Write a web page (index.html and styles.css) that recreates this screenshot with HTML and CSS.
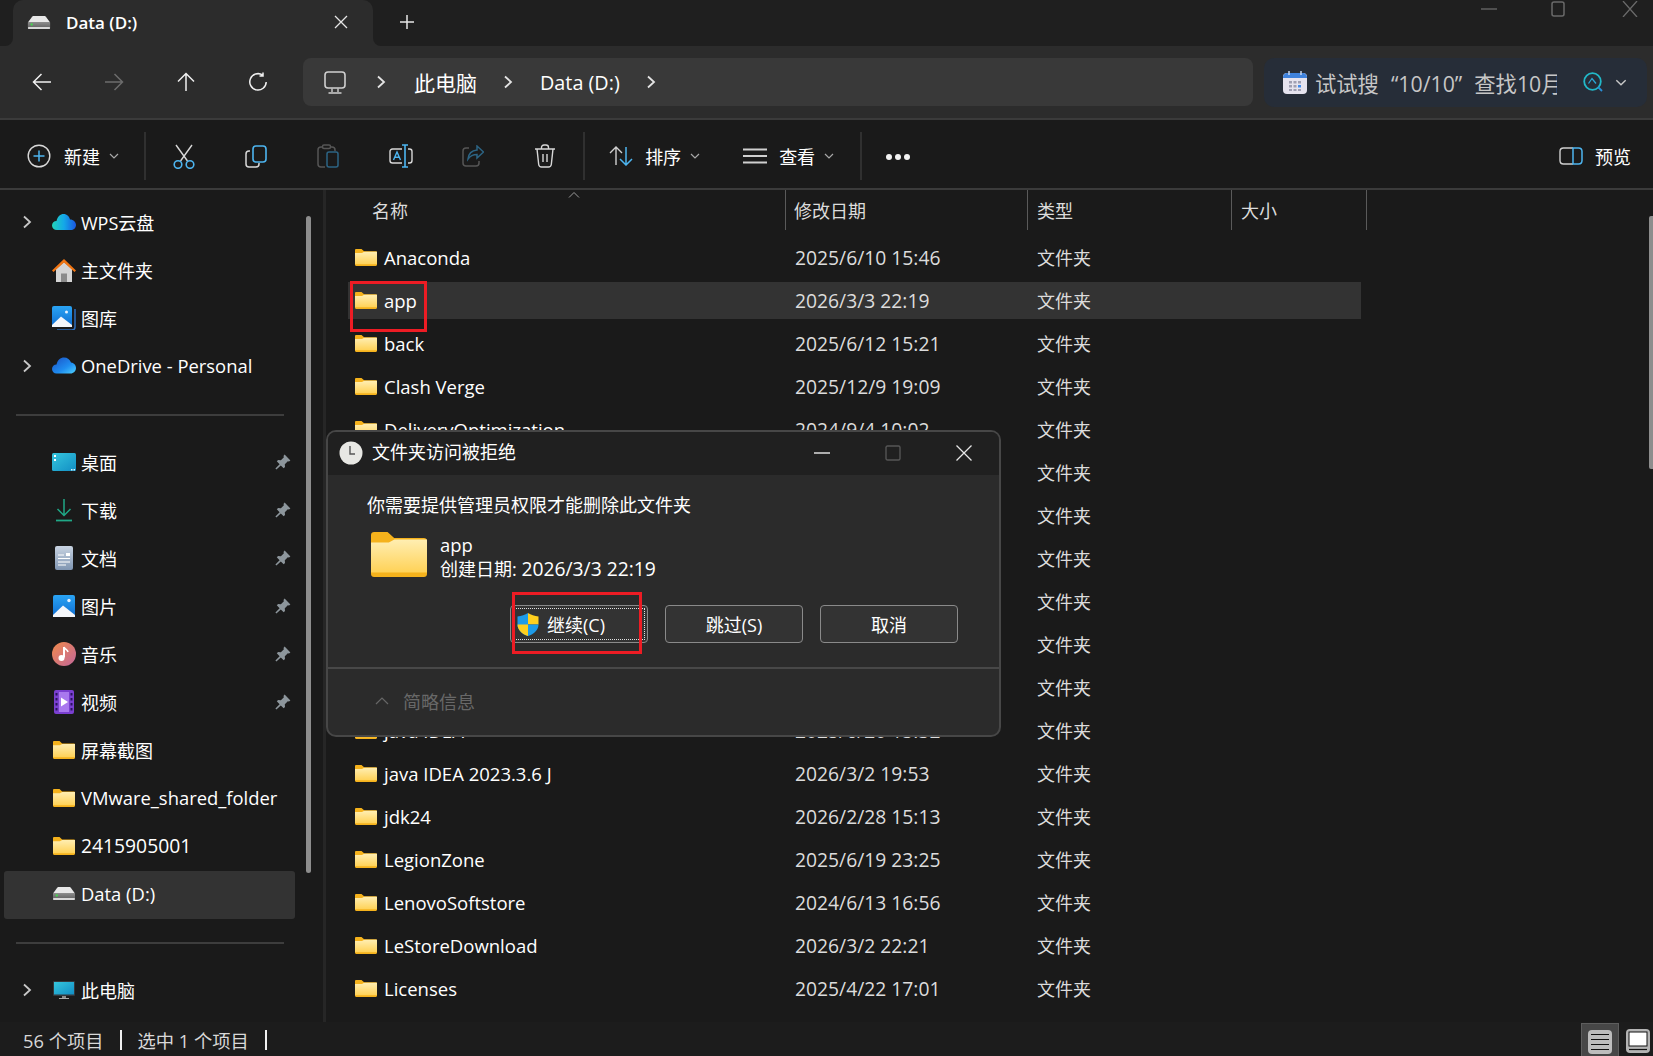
FILE: index.html
```html
<!DOCTYPE html>
<html lang="zh-CN">
<head>
  <meta charset="UTF-8">
  <title>Data (D:) - 文件资源管理器</title>
  <link rel="stylesheet" href="styles.css">
</head>
<body>
<svg class="sprite" width="0" height="0">
  <defs>
    <linearGradient id="folderFront" x1="0" y1="0" x2="0" y2="1">
      <stop offset="0" stop-color="#ffeeb2"/>
      <stop offset="1" stop-color="#ffd257"/>
    </linearGradient>
    <linearGradient id="wpsCloud" x1="0" y1="0" x2="1" y2="0">
      <stop offset="0" stop-color="#22d3b8"/>
      <stop offset="0.5" stop-color="#14a8e8"/>
      <stop offset="1" stop-color="#1a56e0"/>
    </linearGradient>
    <linearGradient id="oneCloud" x1="0" y1="0" x2="1" y2="1">
      <stop offset="0" stop-color="#1b4fc4"/>
      <stop offset="0.6" stop-color="#1f8df0"/>
      <stop offset="1" stop-color="#4fd2ff"/>
    </linearGradient>
    <linearGradient id="picBlue" x1="0" y1="0" x2="0" y2="1">
      <stop offset="0" stop-color="#2aa4f4"/>
      <stop offset="1" stop-color="#0f6cd0"/>
    </linearGradient>
    <linearGradient id="deskTeal" x1="0" y1="0" x2="1" y2="1">
      <stop offset="0" stop-color="#35c6dd"/>
      <stop offset="1" stop-color="#128ec4"/>
    </linearGradient>
    <linearGradient id="musicGrad" x1="0" y1="0" x2="1" y2="1">
      <stop offset="0" stop-color="#f08a4b"/>
      <stop offset="1" stop-color="#c2679a"/>
    </linearGradient>
    <linearGradient id="docGrad" x1="0" y1="0" x2="0" y2="1">
      <stop offset="0" stop-color="#c9d4e2"/>
      <stop offset="1" stop-color="#7f95b2"/>
    </linearGradient>
    <linearGradient id="driveGrad" x1="0" y1="0" x2="0" y2="1">
      <stop offset="0" stop-color="#8a8a8a"/>
      <stop offset="1" stop-color="#5b5b5b"/>
    </linearGradient>
    <symbol id="folder" viewBox="0 0 22 18" preserveAspectRatio="none">
      <path d="M0 1.2C0 .5.5 0 1.2 0h5.3l2.6 2.4h11.7c.7 0 1.2.5 1.2 1.2v13.2c0 .7-.5 1.2-1.2 1.2H1.2C.5 18 0 17.5 0 16.8z" fill="#f5b21c"/>
      <path d="M0 4.2 7 4.2 9.2 3H22v13.2H0z" fill="url(#folderFront)"/>
    </symbol>
    <symbol id="pin" viewBox="0 0 16 16">
      <path d="M9.6.6 15.4 6.400 14 7.600l-1.200-.4-3 3 .2 2.800-1.300 1.300L5.800 11.400 1.400 15.600.4 14.600 4.600 10.200 1.800 7.300 3.100 6l2.800.2 3-3-.4-1.200z" fill="#8d969c"/>
    </symbol>
    <symbol id="chev-right" viewBox="0 0 10 14">
      <path d="M2 1.500 8 7 2 12.500" fill="none" stroke="currentColor" stroke-width="1.800"/>
    </symbol>
    <symbol id="chev-down" viewBox="0 0 10 6">
      <path d="M1 1 5 5 9 1" fill="none" stroke="currentColor" stroke-width="1.200"/>
    </symbol>
    <symbol id="drive" viewBox="0 0 24 14">
      <path d="M4 1.500C4.500.6 5.200 0 6.300 0h11.400c1.100 0 1.800.6 2.300 1.500L24 7H0z" fill="#e8e8e8"/>
      <path d="M0 7h24v5.500c0 .8-.7 1.500-1.500 1.500h-21C.7 14 0 13.300 0 12.500z" fill="url(#driveGrad)"/>
      <rect x="0" y="11.800" width="24" height="2.200" rx="1" fill="#d8d8d8"/>
      <rect x="3" y="8" width="2.200" height="2.200" fill="#3fdc4a"/>
    </symbol>
  </defs>
</svg>

<div class="window">

  <div class="tabbar">
    <div class="tab-gap-left"></div>
    <div class="tab">
      <svg class="tab-icon" width="24" height="13"><use href="#drive"/></svg>
      <span class="tab-title">Data (D:)</span>
      <svg class="tab-close" width="14" height="14" viewBox="0 0 14 14"><path d="M1 1 13 13M13 1 1 13" stroke="#e6e6e6" stroke-width="1.300"/></svg>
    </div>
    <div class="tab-rest">
      <svg class="tab-plus" width="16" height="16" viewBox="0 0 16 16"><path d="M8 1V15M1 8H15" stroke="#e6e6e6" stroke-width="1.500"/></svg>
      <div class="win-controls">
        <svg width="16" height="16" viewBox="0 0 16 16"><path d="M0 8H16" stroke="#6a6a6a" stroke-width="1.300"/></svg>
        <svg width="14" height="16" viewBox="0 0 14 16"><rect x="1" y="1" width="12" height="14" rx="2" fill="none" stroke="#6a6a6a" stroke-width="1.500"/></svg>
        <svg class="win-close" width="16" height="16" viewBox="0 0 16 16"><path d="M1 0 15 16M15 0 1 16" stroke="#6a6a6a" stroke-width="1.300"/></svg>
      </div>
    </div>
  </div>

  <div class="navbar">
    <div class="nav-buttons">
      <svg width="20" height="20" viewBox="0 0 20 20"><path d="M19 10H1.500M9.500 2 1.500 10l8 8" fill="none" stroke="#f0f0f0" stroke-width="1.500"/></svg>
      <svg width="20" height="20" viewBox="0 0 20 20"><path d="M1 10H18.500M10.500 2l8 8-8 8" fill="none" stroke="#6c6c6c" stroke-width="1.500"/></svg>
      <svg width="20" height="20" viewBox="0 0 20 20"><path d="M10 19V1.500M2 9.500 10 1.500l8 8" fill="none" stroke="#f0f0f0" stroke-width="1.500"/></svg>
      <svg width="20" height="20" viewBox="0 0 20 20"><path d="M14.500 3A8.200 8.200 0 1 0 18.200 10M15 .5V4H11.500" fill="none" stroke="#f0f0f0" stroke-width="1.500"/></svg>
    </div>
    <div class="crumbs">
      <svg class="crumb-pc" width="22" height="23" viewBox="0 0 22 23"><rect x="1" y="1" width="20" height="16" rx="3" fill="none" stroke="#cfcfcf" stroke-width="1.600"/><path d="M8 17.500V21M14 17.500V21M4.500 22H17.500" stroke="#cfcfcf" stroke-width="1.400"/></svg>
      <svg class="crumb-sep first" width="10" height="14"><use href="#chev-right"/></svg>
      <span class="crumb">此电脑</span>
      <svg class="crumb-sep" width="10" height="14"><use href="#chev-right"/></svg>
      <span class="crumb crumb-latin">Data (D:)</span>
      <svg class="crumb-sep" width="10" height="14"><use href="#chev-right"/></svg>
    </div>
    <div class="searchbox">
      <svg width="24" height="23" viewBox="0 0 24 23"><rect y="2" width="24" height="21" rx="4" fill="#e6e3ee"/><path d="M0 6C0 3.800 1.800 2 4 2h16c2.200 0 4 1.800 4 4v1H0z" fill="#3f82dc"/><path d="M6 0v4M18 0v4" stroke="#c9d6ec" stroke-width="1.500"/><g fill="#a09fb2"><rect x="6" y="10" width="3" height="2.500"/><rect x="10.500" y="10" width="3" height="2.500"/><rect x="6" y="14" width="3" height="2.500"/><rect x="10.500" y="14" width="3" height="2.500"/><rect x="15" y="18" width="3" height="2"/><rect x="6" y="18" width="3" height="2"/><rect x="10.500" y="18" width="3" height="2"/></g><rect x="15" y="10" width="3" height="2.500" fill="#a09fb2"/><rect x="15" y="14" width="3" height="2.500" fill="#3f8cf0"/></svg>
      <span class="search-text">试试搜 “10/10” 查找10月</span>
      <svg class="search-q" width="20" height="20" viewBox="0 0 20 20"><circle cx="9.500" cy="9.500" r="8.300" fill="none" stroke="#22b8c8" stroke-width="1.800"/><path d="M15 15l4 4" stroke="#2a8fd8" stroke-width="1.800"/><path d="M5.500 11.500 9 6.500 13 11.500" fill="none" stroke="#2aa8d8" stroke-width="1.300"/></svg>
      <svg class="search-chev" width="12" height="7"><use href="#chev-down"/></svg>
    </div>
  </div>

  <div class="toolbar">
    <div class="tool-menu new-menu">
      <svg width="24" height="24" viewBox="0 0 24 24"><circle cx="12" cy="12" r="10.800" fill="none" stroke="#d8d8d8" stroke-width="1.400"/><path d="M12 6.500v11M6.500 12h11" stroke="#4db5f0" stroke-width="1.500"/></svg>
      <span>新建</span>
      <svg class="menu-chev" width="10" height="6"><use href="#chev-down"/></svg>
    </div>
    <div class="tool-sep"></div>
    <div class="tool-btn"><svg width="22" height="25" viewBox="0 0 22 25"><path d="M3 1 14.500 17M19 1 7.500 17" stroke="#d8d8d8" stroke-width="1.400"/><circle cx="5" cy="20.500" r="3.800" fill="none" stroke="#4db5f0" stroke-width="1.600"/><circle cx="17" cy="20.500" r="3.800" fill="none" stroke="#4db5f0" stroke-width="1.600"/></svg></div>
    <div class="tool-btn"><svg width="22" height="23" viewBox="0 0 22 23"><path d="M5 6H4C2.300 6 1 7.300 1 9v10c0 1.700 1.300 3 3 3h7c1.700 0 3-1.300 3-3v-1" fill="none" stroke="#d8d8d8" stroke-width="1.500"/><rect x="8" y="1" width="13" height="16" rx="3" fill="none" stroke="#4db5f0" stroke-width="1.600"/></svg></div>
    <div class="tool-btn"><svg width="22" height="24" viewBox="0 0 22 24"><path d="M14 3h1c1.700 0 3 1.300 3 3v1M8 23H4c-1.700 0-3-1.300-3-3V6c0-1.700 1.300-3 3-3h1" fill="none" stroke="#555" stroke-width="1.500"/><rect x="5.500" y="1" width="8" height="3.500" rx="1.500" fill="none" stroke="#555" stroke-width="1.500"/><rect x="10" y="8" width="11" height="15" rx="2" fill="none" stroke="#2c6484" stroke-width="1.500"/></svg></div>
    <div class="tool-btn"><svg width="24" height="24" viewBox="0 0 24 24"><path d="M13 5H3.500C2 5 1 6 1 7.500v9C1 18 2 19 3.500 19H13M19 5h1.500C22 5 23 6 23 7.500v9c0 1.500-1 2.500-2.500 2.500H19" fill="none" stroke="#d8d8d8" stroke-width="1.400"/><path d="M16 1v22M13 1h6M13 23h6" stroke="#4db5f0" stroke-width="1.600"/><path d="M4.500 16 8 8l3.500 8M5.800 13.300h4.400" fill="none" stroke="#4db5f0" stroke-width="1.400"/></svg></div>
    <div class="tool-btn"><svg width="22" height="22" viewBox="0 0 22 22"><path d="M7 3H4C2.300 3 1 4.300 1 6v12c0 1.700 1.300 3 3 3h10c1.700 0 3-1.300 3-3v-2" fill="none" stroke="#555" stroke-width="1.500"/><path d="M15 1l6.500 6-6.500 6V9.500C11 9.500 8.500 10.500 6 14c.5-5 3.500-8.500 9-9z" fill="none" stroke="#2c6484" stroke-width="1.500"/></svg></div>
    <div class="tool-btn"><svg width="22" height="24" viewBox="0 0 22 24"><path d="M1 5H21M3 5l1.700 15.500c.2 1.500 1.200 2.500 2.800 2.500h7c1.600 0 2.600-1 2.800-2.500L19 5M7.500 5V3.500C7.500 2 8.500 1 10 1h2c1.500 0 2.500 1 2.500 2.500V5M9 10v8M13 10v8" fill="none" stroke="#d8d8d8" stroke-width="1.400"/></svg></div>
    <div class="tool-sep"></div>
    <div class="tool-menu sort-menu">
      <svg width="24" height="20" viewBox="0 0 24 20"><path d="M7 19V1M1 7l6-6 6 6" fill="none" stroke="#d0d0d0" stroke-width="1.400"/><path d="M17 1V19M11 13l6 6 6-6" fill="none" stroke="#4db5f0" stroke-width="1.500"/></svg>
      <span>排序</span>
      <svg class="menu-chev" width="10" height="6"><use href="#chev-down"/></svg>
    </div>
    <div class="tool-menu view-menu">
      <svg width="24" height="16" viewBox="0 0 24 16"><path d="M0 1.500H24M0 8H24M0 14.500H24" stroke="#cfcfcf" stroke-width="1.800"/></svg>
      <span>查看</span>
      <svg class="menu-chev" width="10" height="6"><use href="#chev-down"/></svg>
    </div>
    <div class="tool-sep"></div>
    <div class="tool-more"><i></i><i></i><i></i></div>
    <div class="tool-menu preview-menu">
      <svg width="24" height="18" viewBox="0 0 24 18"><path d="M14 1H4.500C2.500 1 1 2.500 1 4.500v9C1 15.500 2.500 17 4.500 17H14" fill="none" stroke="#cfcfcf" stroke-width="1.400"/><path d="M14 1h5.500c2 0 3.500 1.500 3.500 3.500v9c0 2-1.500 3.500-3.500 3.500H14z" fill="none" stroke="#4db5f0" stroke-width="1.500"/></svg>
      <span>预览</span>
    </div>
  </div>

  <div class="content">
    <div class="sidebar">
      <div class="side-row"><svg class="side-chev" width="10" height="14"><use href="#chev-right"/></svg><svg class="side-icon" width="24" height="18" viewBox="0 0 24 18"><path d="M5 17C2 17 0 15 0 12.500S2 8 4.500 8C5.500 3.500 8.500 1 11.500 1c3.500 0 6 2.500 6.500 5.500 3.500 0 6 2.500 6 5.500 0 3-2.500 5-5 5z" fill="url(#wpsCloud)"/></svg><span>WPS云盘</span></div>
      <div class="side-row"><span class="side-chev"></span><svg class="side-icon" width="24" height="24" viewBox="0 0 24 24"><path d="M4 11 12 4l8 7V24h-5v-8H9v8H4z" fill="#d4d4d4"/><path d="M9 15.500h6V24H9z" fill="#8a8a8a"/><path d="M0 12.500 12 1l12 11.500-1.500 1.500L12 4.500 1.500 14z" fill="#ef7412"/></svg><span>主文件夹</span></div>
      <div class="side-row"><span class="side-chev"></span><svg class="side-icon" width="24" height="24" viewBox="0 0 24 24"><path d="M23 3v18c0 1.700-1.300 3-3 3H5" fill="none" stroke="#2d6fc0" stroke-width="1.500"/><rect y="0" width="20" height="21" rx="2" fill="url(#picBlue)"/><path d="M0 19 9 10.500 20 19v2H0z" fill="#f4f6fa"/><circle cx="14.500" cy="6" r="1.500" fill="#e8f2ff"/></svg><span>图库</span></div>
      <div class="side-row"><svg class="side-chev" width="10" height="14"><use href="#chev-right"/></svg><svg class="side-icon" width="24" height="17" viewBox="0 0 24 17"><path d="M4.500 16.500C2 16.500 0 14.500 0 12s2-4.500 4.500-4.500C5.500 3 8.500 .5 12 .5c3.500 0 6 2 7 5 2.800.3 5 2.700 5 5.500 0 3-2.500 5.500-5.500 5.500z" fill="url(#oneCloud)"/></svg><span class="latin">OneDrive - Personal</span></div>
      <div class="side-sep"></div>
      <div class="side-row"><span class="side-chev"></span><svg class="side-icon" width="24" height="18" viewBox="0 0 24 18"><rect width="24" height="18" rx="1.500" fill="url(#deskTeal)"/><rect x="2" y="2" width="2" height="2" fill="#fff"/><rect x="2" y="6" width="2" height="2" fill="#fff"/><rect x="19" y="16" width="1.500" height="1.500" fill="#d8f6ff"/><rect x="21.500" y="16" width="1.500" height="1.500" fill="#d8f6ff"/></svg><span>桌面</span><svg class="side-pin" width="16" height="16"><use href="#pin"/></svg></div>
      <div class="side-row"><span class="side-chev"></span><svg class="side-icon" width="24" height="24" viewBox="0 0 24 24"><path d="M12 1V17M5.500 11 12 17.500 18.500 11" fill="none" stroke="#20a887" stroke-width="1.500"/><path d="M4 22.500H20" stroke="#20a887" stroke-width="1.800"/></svg><span>下载</span><svg class="side-pin" width="16" height="16"><use href="#pin"/></svg></div>
      <div class="side-row"><span class="side-chev"></span><svg class="side-icon" width="24" height="24" viewBox="0 0 24 24"><rect x="3" y="0" width="18" height="24" rx="2" fill="url(#docGrad)"/><path d="M6 9h6M6 12.500h12M6 16h12M6 19h8" stroke="#fff" stroke-width="1.200"/><rect x="14" y="7" width="4" height="3" fill="#fff"/></svg><span>文档</span><svg class="side-pin" width="16" height="16"><use href="#pin"/></svg></div>
      <div class="side-row"><span class="side-chev"></span><svg class="side-icon" width="24" height="22" viewBox="0 0 24 22"><rect x="1" width="22" height="22" rx="2" fill="url(#picBlue)"/><path d="M1 20 11 10.500 23 20v2H1z" fill="#f4f6fa"/><circle cx="17" cy="5.500" r="1.700" fill="#e8f2ff"/></svg><span>图片</span><svg class="side-pin" width="16" height="16"><use href="#pin"/></svg></div>
      <div class="side-row"><span class="side-chev"></span><svg class="side-icon" width="24" height="24" viewBox="0 0 24 24"><circle cx="12" cy="12" r="12" fill="url(#musicGrad)"/><path d="M12 5v10.500" stroke="#fff" stroke-width="2"/><path d="M12 5c1 2.500 3.500 2.500 4 5" fill="none" stroke="#fff" stroke-width="1.600"/><circle cx="9.500" cy="16" r="3" fill="#fff"/></svg><span>音乐</span><svg class="side-pin" width="16" height="16"><use href="#pin"/></svg></div>
      <div class="side-row"><span class="side-chev"></span><svg class="side-icon" width="24" height="24" viewBox="0 0 24 24"><rect x="2" width="20" height="24" rx="2" fill="#7a3fd0"/><rect x="7" y="2" width="10" height="20" fill="#a978ee"/><g fill="#2a1460"><rect x="3.500" y="3" width="2" height="2.500"/><rect x="3.500" y="8" width="2" height="2.500"/><rect x="3.500" y="13" width="2" height="2.500"/><rect x="3.500" y="18" width="2" height="2.500"/><rect x="18.500" y="3" width="2" height="2.500"/><rect x="18.500" y="8" width="2" height="2.500"/><rect x="18.500" y="13" width="2" height="2.500"/><rect x="18.500" y="18" width="2" height="2.500"/></g><path d="M9 7.500 16 12l-7 4.500z" fill="#fff"/></svg><span>视频</span><svg class="side-pin" width="16" height="16"><use href="#pin"/></svg></div>
      <div class="side-row"><span class="side-chev"></span><svg class="side-icon side-folder" width="22" height="18"><use href="#folder"/></svg><span>屏幕截图</span></div>
      <div class="side-row"><span class="side-chev"></span><svg class="side-icon side-folder" width="22" height="18"><use href="#folder"/></svg><span class="latin">VMware_shared_folder</span></div>
      <div class="side-row"><span class="side-chev"></span><svg class="side-icon side-folder" width="22" height="18"><use href="#folder"/></svg><span class="num">2415905001</span></div>
      <div class="side-row selected"><span class="side-chev"></span><svg class="side-icon side-folder" width="22" height="13"><use href="#drive"/></svg><span class="latin">Data (D:)</span></div>
      <div class="side-sep"></div>
      <div class="side-row"><svg class="side-chev" width="10" height="14"><use href="#chev-right"/></svg><svg class="side-icon side-folder" width="22" height="18" viewBox="0 0 22 18"><rect width="22" height="15" rx="1" fill="#33373c"/><rect x="1" y="1" width="20" height="12.500" fill="url(#deskTeal)"/><rect x="9" y="15" width="4" height="2" fill="#8a8a8a"/><rect x="6" y="17" width="10" height="1" fill="#aaa"/></svg><span>此电脑</span></div>
      <div class="side-thumb"></div>
    </div>

    <div class="files">
      <div class="file-head">
        <div class="head-cell head-name">名称<svg class="sort-caret" width="12" height="6" viewBox="0 0 12 6"><path d="M1 5.500 6 .5l5 5" fill="none" stroke="#9a9a9a" stroke-width="1"/></svg></div>
        <div class="head-cell head-date">修改日期</div>
        <div class="head-cell">类型</div>
        <div class="head-cell">大小</div>
      </div>
      <div class="file-list">
        <div class="file-row"><div class="file-name"><svg width="22" height="17"><use href="#folder"/></svg>Anaconda</div><div class="file-date">2025/6/10 15:46</div><div class="file-type">文件夹</div></div>
        <div class="file-row selected"><div class="file-name"><svg width="22" height="17"><use href="#folder"/></svg>app</div><div class="file-date">2026/3/3 22:19</div><div class="file-type">文件夹</div></div>
        <div class="file-row"><div class="file-name"><svg width="22" height="17"><use href="#folder"/></svg>back</div><div class="file-date">2025/6/12 15:21</div><div class="file-type">文件夹</div></div>
        <div class="file-row"><div class="file-name"><svg width="22" height="17"><use href="#folder"/></svg>Clash Verge</div><div class="file-date">2025/12/9 19:09</div><div class="file-type">文件夹</div></div>
        <div class="file-row"><div class="file-name"><svg width="22" height="17"><use href="#folder"/></svg>DeliveryOptimization</div><div class="file-date">2024/9/4 10:02</div><div class="file-type">文件夹</div></div>
        <div class="file-row"><div class="file-name"></div><div class="file-date"></div><div class="file-type">文件夹</div></div>
        <div class="file-row"><div class="file-name"></div><div class="file-date"></div><div class="file-type">文件夹</div></div>
        <div class="file-row"><div class="file-name"></div><div class="file-date"></div><div class="file-type">文件夹</div></div>
        <div class="file-row"><div class="file-name"></div><div class="file-date"></div><div class="file-type">文件夹</div></div>
        <div class="file-row"><div class="file-name"></div><div class="file-date"></div><div class="file-type">文件夹</div></div>
        <div class="file-row"><div class="file-name"></div><div class="file-date"></div><div class="file-type">文件夹</div></div>
        <div class="file-row"><div class="file-name"><svg width="22" height="17"><use href="#folder"/></svg>java IDEA</div><div class="file-date">2025/6/20 15:32</div><div class="file-type">文件夹</div></div>
        <div class="file-row"><div class="file-name"><svg width="22" height="17"><use href="#folder"/></svg>java IDEA 2023.3.6 J</div><div class="file-date">2026/3/2 19:53</div><div class="file-type">文件夹</div></div>
        <div class="file-row"><div class="file-name"><svg width="22" height="17"><use href="#folder"/></svg>jdk24</div><div class="file-date">2026/2/28 15:13</div><div class="file-type">文件夹</div></div>
        <div class="file-row"><div class="file-name"><svg width="22" height="17"><use href="#folder"/></svg>LegionZone</div><div class="file-date">2025/6/19 23:25</div><div class="file-type">文件夹</div></div>
        <div class="file-row"><div class="file-name"><svg width="22" height="17"><use href="#folder"/></svg>LenovoSoftstore</div><div class="file-date">2024/6/13 16:56</div><div class="file-type">文件夹</div></div>
        <div class="file-row"><div class="file-name"><svg width="22" height="17"><use href="#folder"/></svg>LeStoreDownload</div><div class="file-date">2026/3/2 22:21</div><div class="file-type">文件夹</div></div>
        <div class="file-row"><div class="file-name"><svg width="22" height="17"><use href="#folder"/></svg>Licenses</div><div class="file-date">2025/4/22 17:01</div><div class="file-type">文件夹</div></div>
      </div>
      <div class="files-thumb"></div>
    </div>
  </div>

  <div class="statusbar">
    <span>56 个项目</span><i class="status-bar"></i><span>选中 1 个项目</span><i class="status-bar"></i>
    <div class="view-btns">
      <div class="view-btn active"><svg width="24" height="24" viewBox="0 0 24 24"><rect width="24" height="24" rx="4" fill="#bdbdbd"/><path d="M3 4.500H21M3 9.500H21M3 14.500H21M3 19.500H21" stroke="#111" stroke-width="1.200"/></svg></div>
      <div class="view-btn"><svg width="24" height="24" viewBox="0 0 24 24"><rect width="24" height="24" rx="4" fill="#b4b4b4"/><rect x="3" y="3" width="18" height="14" fill="#fff" stroke="#111"/><path d="M3 20.500H21" stroke="#111" stroke-width="1.200"/></svg></div>
    </div>
  </div>

  <div class="mark mark-app"></div>

  <div class="dialog">
    <div class="dialog-title">
      <svg width="24" height="24" viewBox="0 0 24 24"><circle cx="12" cy="12" r="11.500" fill="#e8e8e4"/><path d="M11 5v8h5" fill="none" stroke="#555" stroke-width="1.400"/></svg>
      <span>文件夹访问被拒绝</span>
      <div class="dialog-controls">
        <svg width="16" height="16" viewBox="0 0 16 16"><path d="M0 8H16" stroke="#ddd" stroke-width="1.300"/></svg>
        <svg width="16" height="16" viewBox="0 0 16 16"><rect x="1" y="1" width="14" height="14" rx="1.500" fill="none" stroke="#555" stroke-width="1.400"/></svg>
        <svg width="16" height="16" viewBox="0 0 16 16"><path d="M.5.500 15.500 15.500M15.500.500 .5 15.500" stroke="#e6e6e6" stroke-width="1.300"/></svg>
      </div>
    </div>
    <div class="dialog-body">
      <p class="dialog-msg">你需要提供管理员权限才能删除此文件夹</p>
      <div class="dialog-file">
        <svg width="56" height="45"><use href="#folder"/></svg>
        <div class="dialog-meta">
          <div class="latin">app</div>
          <div>创建日期: <span class="num">2026/3/3 22:19</span></div>
        </div>
      </div>
      <div class="dialog-btns">
        <button class="dlg-btn focused"><svg width="22" height="23" viewBox="0 0 22 23"><path d="M11 0C8 2 4.500 3 .5 3.500v8C.5 17 5 21 11 23z" fill="#1e9be8"/><path d="M11 0c3 2 6.500 3 10.500 3.500V11.500H11z" fill="#ffcf1e"/><path d="M.5 11.500H11V23C5 21 .5 17 .5 11.500z" fill="#ffcf1e"/><path d="M11 11.500H21.500C21.500 17 17 21 11 23z" fill="#1e9be8"/></svg>继续(C)</button>
        <button class="dlg-btn">跳过(S)</button>
        <button class="dlg-btn">取消</button>
      </div>
    </div>
    <div class="dialog-foot">
      <svg width="14" height="8" viewBox="0 0 14 8"><path d="M1 7 7 1l6 6" fill="none" stroke="#666" stroke-width="1.200"/></svg>
      <span>简略信息</span>
    </div>
    <div class="mark mark-btn"></div>
  </div>

</div>
</body>
</html>
```

FILE: styles.css
```css
* { box-sizing: border-box; }

html, body {
  margin: 0;
  height: 100%;
  overflow: hidden;
  background: #1a1a1a;
  color: #fff;
  font-family: "Open Sans", "Noto Sans CJK SC", sans-serif;
  font-size: 18px;
}

.sprite {
  position: absolute;
}

svg {
  flex: none;
  display: block;
}

/* Latin and digit runs sit a little larger than the CJK next to them */
.latin { font-size: 18.4px; }

.num { font-size: 19.3px; }

.window {
  position: relative;
  display: flex;
  flex-direction: column;
  height: 1056px;
}

/* tabs */
.tabbar {
  display: flex;
  height: 46px;
  background: linear-gradient(#1f1f1f 50%, #2c2c2c 50%);
}

.tab-gap-left {
  width: 13px;
  background: #1f1f1f;
  border-bottom-right-radius: 8px;
}

.tab {
  display: flex;
  align-items: center;
  width: 360px;
  padding: 0 25px 2px 14px;
  background: #2c2c2c;
  border-radius: 10px 10px 0 0;
}

.tab-title {
  margin-left: 15px;
  font-size: 17px;
  font-weight: 600;
}

.tab-close {
  margin-left: auto;
}

.tab-rest {
  flex: 1;
  display: flex;
  align-items: center;
  padding: 0 0 2px 26px;
  background: #1f1f1f;
  border-bottom-left-radius: 8px;
}

.win-controls {
  display: flex;
  gap: 54px;
  align-items: center;
  margin: -26px 15px 0 auto;
}

.win-close {
  margin-left: 3px;
}

/* address row */
.navbar {
  display: flex;
  align-items: center;
  height: 74px;
  background: #2c2c2c;
  border-bottom: 2px solid #3b3b3b;
}

.nav-buttons {
  display: flex;
  gap: 52px;
  width: 303px;
  padding-left: 32px;
}

.crumbs {
  display: flex;
  align-items: center;
  width: 950px;
  height: 48px;
  padding-left: 21px;
  background: #393939;
  border-radius: 8px;
  font-size: 21px;
}

.crumb-latin {
  font-size: 19.800px;
}

.crumb-sep {
  margin: 0 27px 0 26px;
  color: #e4e4e4;
}

.crumb-sep.first {
  margin: 0 28px 0 30px;
}

.searchbox {
  display: flex;
  align-items: center;
  width: 383px;
  height: 49px;
  margin-left: 11px;
  padding-left: 19px;
  background: #262d38;
  border-radius: 10px;
  font-size: 21.300px;
  color: #c6c6c6;
}

.search-text {
  flex: none;
  width: 242px;
  margin-left: 8px;
  overflow: hidden;
  white-space: nowrap;
  word-spacing: 6.500px;
}

.search-q {
  margin-left: 26px;
}

.search-chev {
  margin-left: 12px;
  color: #c8c8c8;
}

/* commands */
.toolbar {
  display: flex;
  align-items: center;
  height: 70px;
  padding-top: 4px;
  background: #1a1a1a;
  border-bottom: 2px solid #3b3b3b;
  font-size: 18px;
}

.tool-menu {
  display: flex;
  align-items: center;
}

.new-menu {
  width: 144px;
  padding-left: 27px;
}

.new-menu span { margin-left: 13px; }

.menu-chev {
  margin-left: 9px;
  color: #a8a8a8;
}

.tool-sep {
  width: 2px;
  height: 48px;
  background: #303030;
}

.tool-btn {
  display: flex;
  justify-content: center;
  width: 72.200px;
}

.tool-sep + .tool-btn { margin-left: 2px; }

.tool-btn + .tool-sep { margin-left: 2px; }

.sort-menu {
  width: 134px;
  margin-left: 24px;
}

.sort-menu span { margin-left: 12px; }

.view-menu { width: 117px; }

.view-menu span { margin-left: 12px; }

.tool-more {
  display: flex;
  gap: 3px;
  margin: 2px 0 0 24px;
}

.tool-more i {
  width: 6px;
  height: 6px;
  border-radius: 50%;
  background: #f2f2f2;
}

.preview-menu {
  margin-left: auto;
  padding-right: 22px;
}

.preview-menu span { margin-left: 12px; }

/* main area */
.content {
  position: relative;
  flex: 1;
  display: flex;
  min-height: 0;
}

.sidebar {
  position: relative;
  width: 326px;
  padding: 9px 0 0 4px;
  border-right: 3px solid #262626;
  overflow: hidden;
}

.side-row {
  display: flex;
  align-items: center;
  width: 291px;
  height: 48px;
  padding: 0 4px 2.500px 0;
  border-radius: 3px;
  white-space: nowrap;
}

.side-row.selected {
  background: #333;
}

.side-chev {
  width: 10px;
  margin: 0 20px 0 18px;
  color: #c8c8c8;
}

.side-icon {
  margin-right: 5px;
}

.side-folder {
  margin-left: 1px;
  margin-right: 6px;
}

.side-pin {
  margin-left: auto;
}

.side-sep {
  width: 268px;
  height: 48px;
  margin-left: 12px;
  background: linear-gradient(#3d3d3d, #3d3d3d) center / 100% 2px no-repeat;
}

.side-thumb {
  position: absolute;
  top: 26px;
  left: 306px;
  width: 5px;
  height: 657px;
  border-radius: 3px;
  background: #8d8d8d;
}

.files {
  position: relative;
  flex: 1;
  min-width: 0;
  overflow: hidden;
}

.file-head {
  display: grid;
  grid-template-columns: 460px 242px 204px 135px;
  height: 40px;
  color: #dcdcdc;
}

.head-cell {
  position: relative;
  display: flex;
  align-items: center;
  padding-left: 9px;
  border-right: 1px solid #5a5a5a;
}

.head-name {
  padding-left: 46px;
}

.head-date {
  padding-left: 8px;
}

.sort-caret {
  position: absolute;
  top: 2px;
  left: 242px;
}

.file-list {
  display: flex;
  flex-direction: column;
  gap: 6px;
  padding: 9.300px 0 0 22px;
}

.file-row {
  display: grid;
  flex: none;
  grid-template-columns: 438px 242px 203px;
  align-items: center;
  width: 1013px;
  height: 37px;
  color: #dcdcdc;
}

.file-row.selected {
  background: #333;
}

.file-name {
  display: flex;
  align-items: center;
  gap: 7px;
  padding-left: 7px;
  font-size: 18.500px;
  color: #fff;
}

.file-date {
  padding-left: 9px;
  font-size: 19.300px;
}

.file-type {
  padding: 0 0 2px 9px;
}

.files-thumb {
  position: absolute;
  top: 26px;
  right: 0;
  width: 4px;
  height: 253px;
  border-radius: 2px 0 0 2px;
  background: #8d8d8d;
}

.statusbar {
  display: flex;
  align-items: center;
  height: 34px;
  padding: 1px 0 0 23px;
  background: #1c1c1c;
  color: #d8d8d8;
  font-size: 18.300px;
}

.status-bar {
  width: 2px;
  height: 20px;
  margin: 0 16px;
  background: #f0f0f0;
}

.view-btns {
  display: flex;
  align-self: stretch;
  margin-left: auto;
  padding-right: 3px;
}

.view-btn {
  display: flex;
  align-items: flex-end;
  justify-content: center;
  width: 38px;
  padding-bottom: 2px;
  margin-left: 7px;
}

.view-btn.active {
  background: #474747;
  border: 1px solid #5e5e5e;
  border-bottom: 0;
}

.view-btn:not(.active) {
  width: 24px;
  margin-left: 7px;
  padding-bottom: 3px;
}

/* red annotation frames */
.mark {
  position: absolute;
  border: 3px solid #ed1c24;
  pointer-events: none;
}

.mark-app {
  top: 281px;
  left: 350px;
  width: 77px;
  height: 51px;
}

.mark-btn {
  top: 160px;
  left: 184px;
  width: 130px;
  height: 62px;
}

/* dialog window */
.dialog {
  position: absolute;
  top: 430px;
  left: 326px;
  display: flex;
  flex-direction: column;
  width: 675px;
  height: 307px;
  background: #2b2b2b;
  border: 2px solid #474747;
  border-radius: 10px;
  overflow: hidden;
}

.dialog-title {
  display: flex;
  align-items: center;
  flex: none;
  height: 43px;
  padding: 0 0 2px 11px;
  background: #202020;
}

.dialog-title span {
  margin-left: 9px;
  padding-bottom: 3px;
}

.dialog-controls {
  display: flex;
  gap: 55px;
  margin-left: auto;
  margin-right: 27px;
}

.dialog-body {
  flex: none;
  height: 194px;
  padding: 17px 41px 0 39px;
  border-bottom: 2px solid #484848;
}

.dialog-msg {
  margin: 0;
  line-height: 26px;
}

.dialog-file {
  display: flex;
  align-items: center;
  gap: 13px;
  height: 45px;
  margin: 14px 0 0 4px;
}

.dialog-meta {
  padding-top: 5px;
  line-height: 23.500px;
}

.dialog-btns {
  display: flex;
  justify-content: flex-end;
  gap: 17px;
  margin-top: 28px;
}

.dlg-btn {
  position: relative;
  display: flex;
  align-items: center;
  justify-content: center;
  gap: 8px;
  width: 138px;
  height: 38px;
  padding: 0;
  background: #333;
  border: 1px solid #8a8a8a;
  border-radius: 4px;
  color: #fff;
  font: inherit;
}

.dlg-btn.focused {
  justify-content: flex-start;
  padding-left: 6px;
}

.dlg-btn.focused::after {
  content: "";
  position: absolute;
  inset: 2px;
  border: 1px dotted #e0e0e0;
}

.dialog-foot {
  flex: 1;
  display: flex;
  align-items: center;
  gap: 14px;
  padding: 0 0 3px 47px;
  color: #686868;
}
```
